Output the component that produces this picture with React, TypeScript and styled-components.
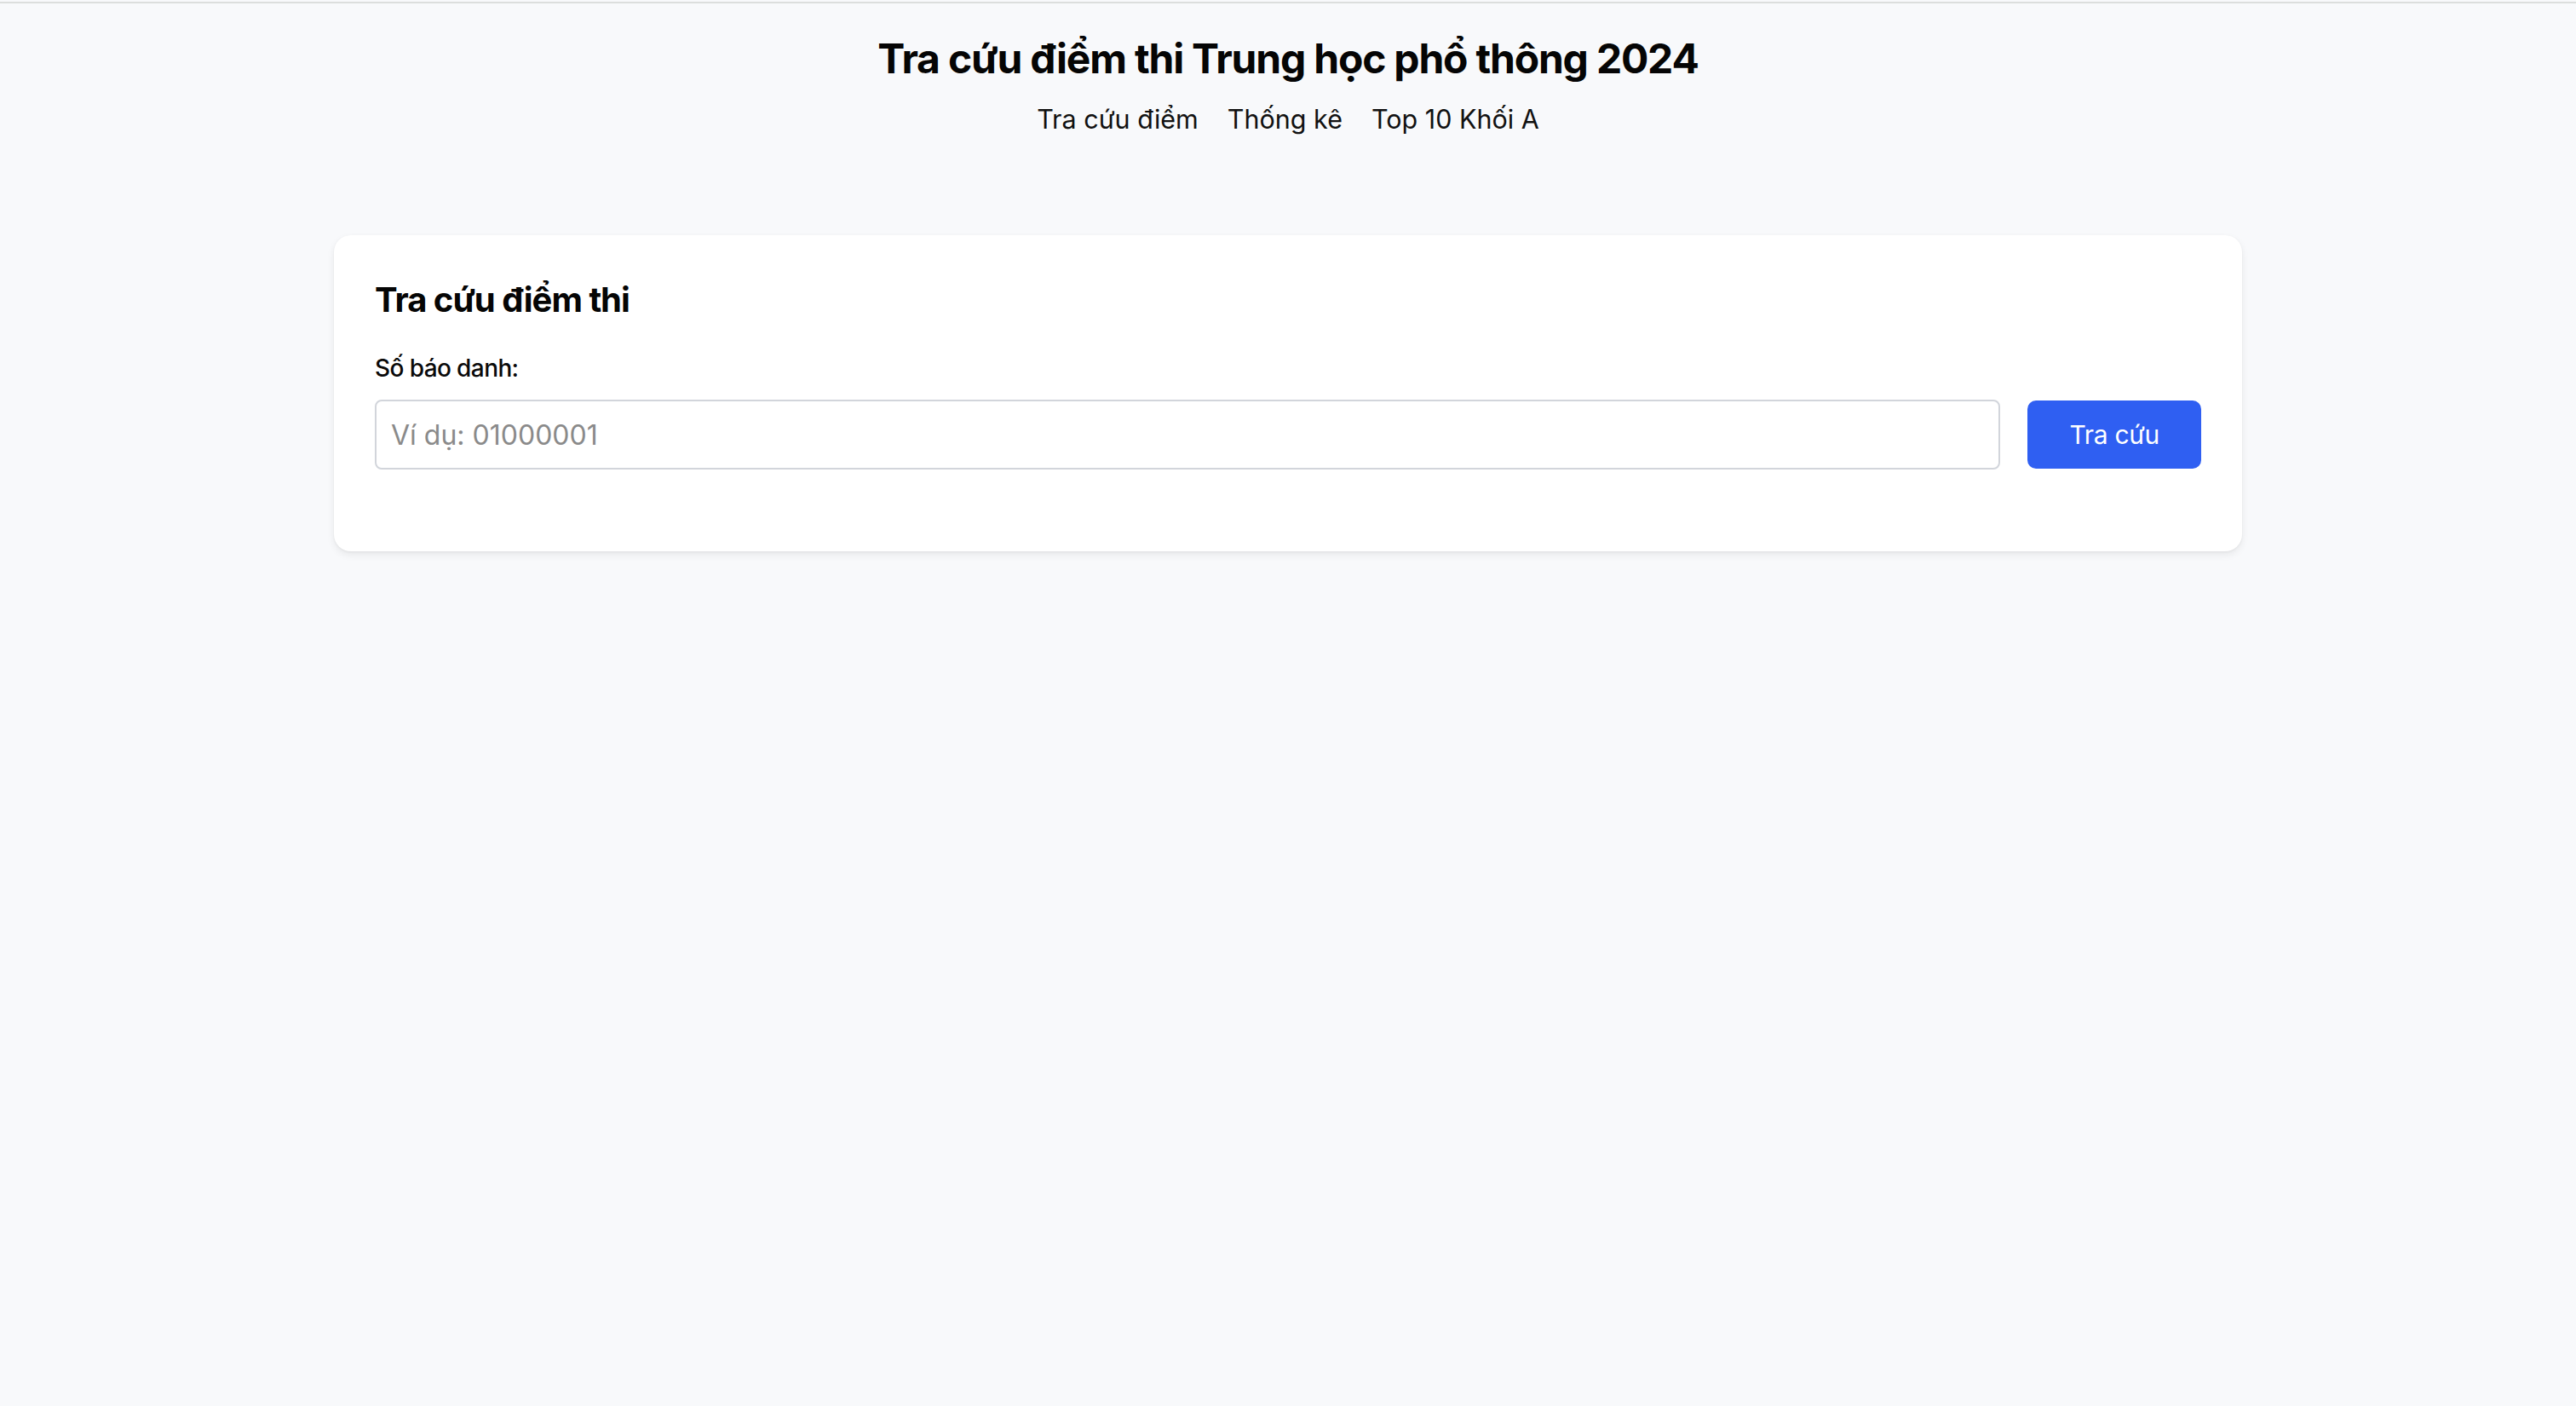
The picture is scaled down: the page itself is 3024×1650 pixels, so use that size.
import React from "react";
import styled, { createGlobalStyle } from "styled-components";

const GlobalStyle = createGlobalStyle`
  html, body {
    margin: 0;
    padding: 0;
    background: #f8f9fb;
  }
  body {
    font-family: Inter, "Noto Sans", "Liberation Sans", sans-serif;
    color: #0a0a0a;
  }
  * { box-sizing: border-box; }
`;

const Page = styled.div`
  min-height: 1650px;
  background: #f8f9fb;
`;

const TopRule = styled.div`
  margin-top: 2px;
  height: 2px;
  background: #dcdedd;
`;

const Header = styled.header`
  display: flex;
  flex-direction: column;
  align-items: center;
  padding-top: 36px;
`;

const Title = styled.h1`
  margin: 0;
  font-size: 48px;
  line-height: 58px;
  font-weight: 700;
  letter-spacing: -1.2px;
  color: #050505;
`;

const Nav = styled.nav`
  display: flex;
  gap: 34px;
  margin-top: 22px;
`;

const NavLink = styled.a`
  font-size: 30.5px;
  line-height: 40px;
  font-weight: 400;
  color: #111;
  text-decoration: none;
  cursor: pointer;
`;

const Main = styled.main`
  max-width: 2240px;
  margin: 116px auto 0;
`;

const Card = styled.section`
  background: #ffffff;
  border-radius: 20px;
  padding: 48px;
  box-shadow: 0 4px 10px rgba(0, 0, 0, 0.07), 0 1px 3px rgba(0, 0, 0, 0.05);
`;

const CardTitle = styled.h2`
  margin: 0;
  font-size: 40px;
  line-height: 56px;
  font-weight: 700;
  letter-spacing: -1px;
  color: #050505;
`;

const Label = styled.label`
  display: block;
  margin-top: 32px;
  margin-bottom: 17px;
  font-size: 28px;
  line-height: 40px;
  font-weight: 500;
  letter-spacing: -0.6px;
  color: #0a0a0a;
`;

const FormRow = styled.form`
  display: flex;
  align-items: center;
  gap: 32px;
  margin-bottom: 48px;
`;

const Input = styled.input`
  flex: 1;
  height: 82px;
  padding: 0 17px;
  border: 2px solid #d2d5db;
  border-radius: 8px;
  font-family: inherit;
  font-size: 32px;
  color: #111;
  background: #fff;
  outline: none;
  &::placeholder {
    color: #8a8a8a;
  }
`;

const Button = styled.button`
  height: 80px;
  padding: 0 49px;
  border: none;
  border-radius: 10px;
  background: #2f5ff2;
  color: #ffffff;
  font-family: inherit;
  font-size: 30px;
  font-weight: 400;
  letter-spacing: -0.3px;
  cursor: pointer;
`;

export default function App() {
  return (
    <Page>
      <GlobalStyle />
      <TopRule />
      <Header>
        <Title>Tra cứu điểm thi Trung học phổ thông 2024</Title>
        <Nav>
          <NavLink>Tra cứu điểm</NavLink>
          <NavLink>Thống kê</NavLink>
          <NavLink>Top 10 Khối A</NavLink>
        </Nav>
      </Header>
      <Main>
        <Card>
          <CardTitle>Tra cứu điểm thi</CardTitle>
          <Label htmlFor="sbd">Số báo danh:</Label>
          <FormRow onSubmit={(e) => e.preventDefault()}>
            <Input id="sbd" type="text" placeholder="Ví dụ: 01000001" />
            <Button type="submit">Tra cứu</Button>
          </FormRow>
        </Card>
      </Main>
    </Page>
  );
}
